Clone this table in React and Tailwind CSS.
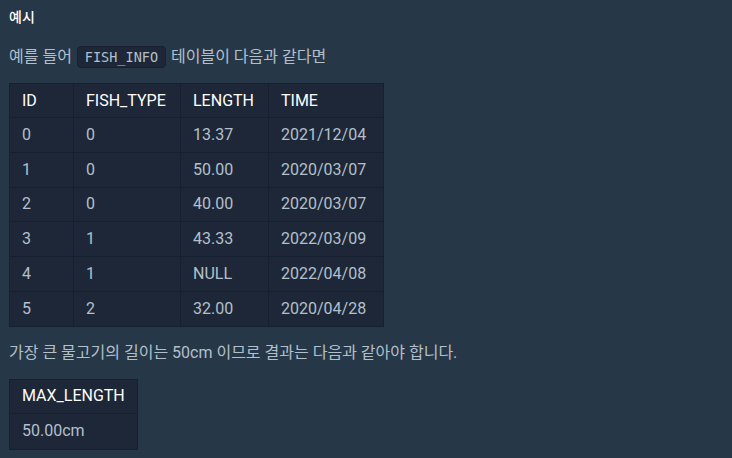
const rows = [
  ["0", "0", "13.37", "2021/12/04"],
  ["1", "0", "50.00", "2020/03/07"],
  ["2", "0", "40.00", "2020/03/07"],
  ["3", "1", "43.33", "2022/03/09"],
  ["4", "1", "NULL", "2022/04/08"],
  ["5", "2", "32.00", "2020/04/28"],
];

const head = ["ID", "FISH_TYPE", "LENGTH", "TIME"];
const widths = ["w-[64px]", "w-[107px]", "w-[88px]", "w-[115px]"];

export default function App() {
  return (
    <div className="min-h-[458px] w-[732px] bg-[#263747] px-[9px] pt-[8px] font-['Roboto','Noto_Sans_CJK_KR',sans-serif] text-[16px] text-[#b2c0cc]">
      <h5 className="text-[14px] font-medium leading-[18px] text-white">예시</h5>

      <p className="mt-[20px] flex items-center leading-[22px]">
        예를 들어
        <code className="mx-[5px] rounded-[4px] border border-[#172030] bg-[#1e2737] px-[7px] font-['DejaVu_Sans_Mono',monospace] text-[13.5px] leading-[20px] text-[#b2c0cc]">
          FISH_INFO
        </code>
        테이블이 다음과 같다면
      </p>

      {/* ── source table ── */}
      <table className="mt-[15px] table-fixed border-collapse bg-[#1e2737]">
        <thead>
          <tr className="h-[34px]">
            {head.map((h, i) => (
              <th
                key={h}
                className={`${widths[i]} border border-[#172030] px-[12px] text-left font-normal text-white`}
              >
                {h}
              </th>
            ))}
          </tr>
        </thead>
        <tbody>
          {rows.map((r) => (
            <tr key={r[0]} className="h-[34.8px]">
              {r.map((c, i) => (
                <td key={i} className="border border-[#172030] px-[12px]">
                  {c}
                </td>
              ))}
            </tr>
          ))}
        </tbody>
      </table>

      <p className="mt-[15px] leading-[22px]">
        가장 큰 물고기의 길이는 50cm 이므로 결과는 다음과 같아야 합니다.
      </p>

      {/* ── result table ── */}
      <table className="mt-[15px] border-collapse bg-[#1e2737]">
        <thead>
          <tr className="h-[34px]">
            <th className="border border-[#172030] px-[12px] text-left font-normal text-white">
              MAX_LENGTH
            </th>
          </tr>
        </thead>
        <tbody>
          <tr className="h-[36px]">
            <td className="border border-[#172030] px-[12px]">50.00cm</td>
          </tr>
        </tbody>
      </table>
    </div>
  );
}
